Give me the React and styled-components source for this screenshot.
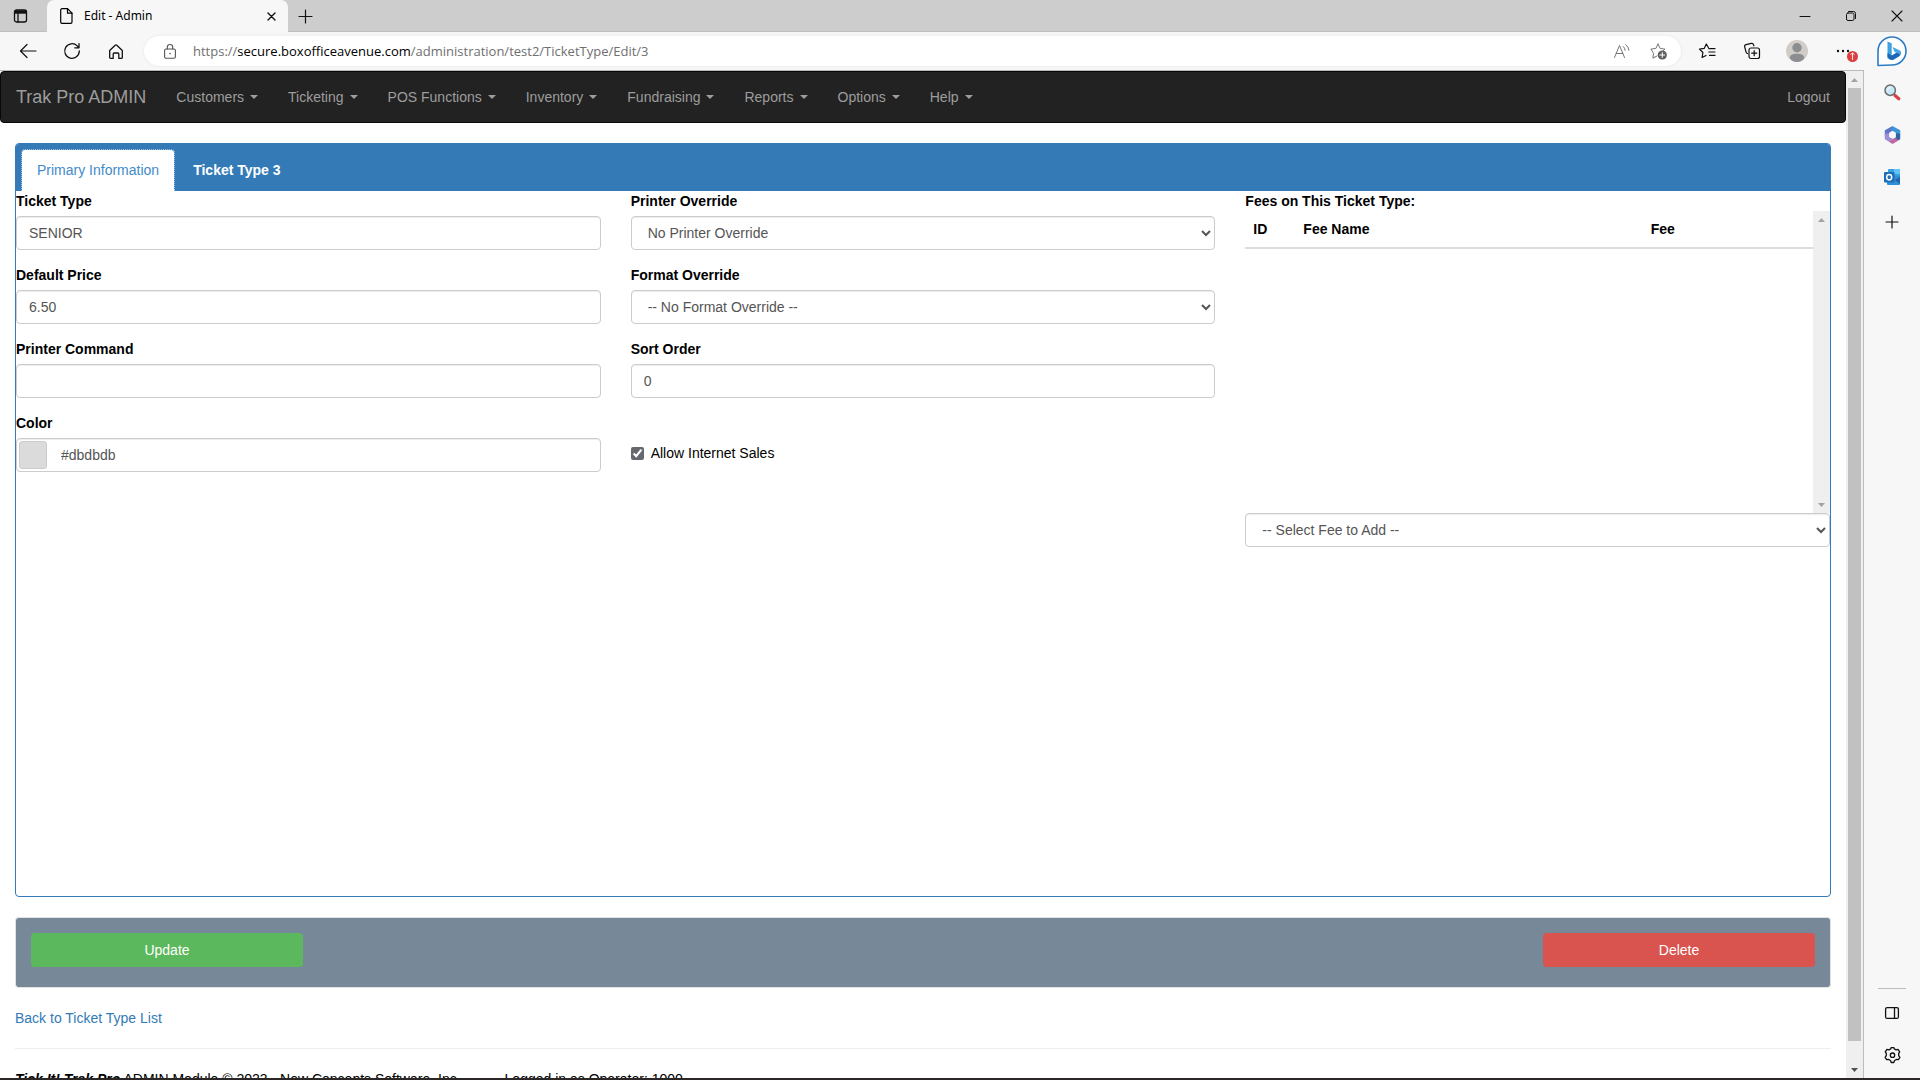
import React from "react";
import styled, { createGlobalStyle, css } from "styled-components";

const Global = createGlobalStyle`
  *, *::before, *::after { box-sizing: border-box; }
  html, body, #root { height: 100%; }
  body {
    margin: 0;
    overflow: hidden;
    font-family: "Liberation Sans", Arial, sans-serif;
    font-size: 14px;
    line-height: 20px;
    color: #000;
    background: #fff;
  }
  button, input, select { font-family: inherit; font-size: inherit; line-height: inherit; }
  a { text-decoration: none; }
  svg { display: block; flex: none; overflow: visible; }
`;

/* ---------- browser window ---------- */

const Window = styled.div`
  height: 100vh;
  display: flex;
  flex-direction: column;
  background: #f7f7f7;
  border-bottom: 2px solid #2b2727;
`;

const chromeFont = css`
  font-family: "Noto Sans", "Open Sans", sans-serif;
`;

const TitleBar = styled.header`
  ${chromeFont}
  flex: none;
  height: 32px;
  display: flex;
  background: #cdcdcd;
  box-shadow: inset 0 -1px #c0c0c0;
`;

const IconButton = styled.button`
  flex: none;
  width: ${(p) => p.$w}px;
  height: ${(p) => p.$h || 32}px;
  padding: 0;
  border: 0;
  background: none;
  color: ${(p) => p.$color || "#111"};
  display: flex;
  align-items: center;
  justify-content: center;
`;

const BrowserTab = styled.div`
  width: 241px;
  margin-left: 7px;
  padding: 0 9px 0 13px;
  display: flex;
  align-items: center;
  background: #f7f7f7;
  border-radius: 7px 7px 0 0;
  font-size: 12px;
`;

const TabTitle = styled.span`
  flex: 1;
  padding-left: 11px;
`;

const Spacer = styled.div`
  flex: 1;
`;

const Body = styled.div`
  flex: 1;
  min-height: 0;
  display: flex;
`;

const Main = styled.div`
  flex: 1;
  min-width: 0;
  display: flex;
  flex-direction: column;
`;

const Toolbar = styled.div`
  ${chromeFont}
  flex: none;
  height: 38px;
  padding-left: 6px;
  display: flex;
  align-items: center;
`;

const AddressBar = styled.div`
  flex: 1;
  height: 30px;
  margin: 0 3px 0 6px;
  padding: 0 4px 0 8px;
  display: flex;
  align-items: center;
  border-radius: 15px;
  background: #fff;
  box-shadow: 0 0 3px #e4e4e4;
`;

const Url = styled.div`
  flex: 1;
  padding-left: 5px;
  font-family: "Open Sans", "Noto Sans", sans-serif;
  font-size: 13px;
  color: #6f6f6f;
  b { font-weight: 400; color: #000; }
`;

const Sidebar = styled.aside`
  width: 56px;
  flex: none;
  padding-bottom: 1px;
  display: flex;
  flex-direction: column;
  align-items: center;
`;

const SideRule = styled.hr`
  width: 28px;
  margin: 0 0 2px;
  border: 0;
  border-top: 1px solid #bdbdbd;
`;

const Viewport = styled.div`
  flex: 1;
  min-height: 0;
  display: flex;
  background: #fff;
  border-top: 1px solid #b9b9b9;
  border-right: 1px solid #bdbdbd;
`;

const Page = styled.div`
  flex: 1;
  min-width: 0;
  overflow: hidden;
`;

const ScrollTrack = styled.div`
  flex: none;
  width: 17px;
  display: flex;
  flex-direction: column;
  align-items: center;
  justify-content: space-between;
  background: #efefef;
`;

const ScrollCap = styled.div`
  height: 17px;
  display: flex;
  align-items: center;
`;

const Thumb = styled.div`
  width: 13px;
  flex: 1;
  margin-bottom: 20px;
  background: #c1c1c1;
`;

/* ---------- site navigation ---------- */

const Navbar = styled.nav`
  display: flex;
  height: 52px;
  background: #222;
  border: 1px solid #080808;
  border-radius: 4px;
  margin-bottom: 20px;
`;

const NavLink = styled.a`
  display: flex;
  align-items: center;
  padding: 0 15px;
  color: #9d9d9d;
  font-size: ${(p) => (p.$brand ? 18 : 14)}px;
`;

const Caret = styled.span`
  margin-left: 6px;
  border-top: 4px solid currentColor;
  border-left: 4px solid transparent;
  border-right: 4px solid transparent;
`;

/* ---------- edit panel ---------- */

const Content = styled.main`
  padding: 0 15px;
`;

const Panel = styled.section`
  border: 1px solid #337ab7;
  border-radius: 4px;
  margin-bottom: 20px;
  overflow: hidden;
`;

const PanelHeading = styled.div`
  display: flex;
  gap: 2px;
  padding: 5px 5px 0;
  background: #337ab7;
`;

const Tab = styled.a`
  padding: 10px 15px;
  border: 1px solid transparent;
  border-bottom: 0;
  border-radius: 4px 4px 0 0;
  line-height: 21px;
  color: #fff;
  font-weight: 700;
  ${(p) =>
    p.$active &&
    css`
      background: #fff;
      background-clip: padding-box;
      border: 1px dotted #9cc3e6;
      border-bottom: 0;
      color: #428bca;
      font-weight: 400;
    `}
`;

const PanelBody = styled.div`
  min-height: 705px;
  display: grid;
  grid-template-columns: repeat(3, minmax(0, 1fr));
  gap: 30px;
`;

const Column = styled.div`
  display: flex;
  flex-direction: column;
`;

const Group = styled.div`
  display: flex;
  flex-direction: column;
  margin-bottom: 15px;
`;

const Label = styled.label`
  font-weight: 700;
  margin-bottom: 5px;
`;

const control = css`
  width: 100%;
  height: 34px;
  padding: 6px 12px;
  border: 1px solid #ccc;
  border-radius: 4px;
  background: #fff;
  color: #555;
  box-shadow: inset 0 1px 1px rgba(0, 0, 0, 0.075);
`;

const Input = styled.input`
  ${control}
`;

const Select = styled.select`
  ${control}
`;

const ColorControl = styled.div`
  ${control}
  display: flex;
  padding: 2px;
`;

const Swatch = styled.button`
  width: 28px;
  height: 28px;
  padding: 0;
  border: 1px solid #ccc;
  border-radius: 3px;
  background: ${(p) => p.$color};
`;

const ColorInput = styled.input`
  flex: 1;
  padding: 0 14px;
  border: 0;
  background: none;
  color: #555;
`;

const CheckRow = styled.label`
  display: flex;
  align-items: center;
  gap: 7px;
  padding-top: 30px;
`;

const Checkbox = styled.input`
  width: 13px;
  height: 13px;
  margin: 0;
  accent-color: #66686e;
`;

const FeesTitle = styled.h2`
  margin: 0;
  font-size: 14px;
  font-weight: 700;
`;

const FeesBox = styled.div`
  height: 302px;
  display: flex;
  align-items: stretch;
`;

const FeesArea = styled.div`
  flex: 1;
`;

const FeesTable = styled.table`
  width: 100%;
  border-collapse: collapse;
  table-layout: fixed;
  th {
    padding: 8px;
    text-align: left;
    border-bottom: 2px solid #ddd;
  }
  th:nth-child(1) { width: 50px; }
  th:nth-child(3) { width: 30%; }
`;

/* ---------- actions and footer ---------- */

const Actions = styled.div`
  display: flex;
  justify-content: space-between;
  padding: 15px 15px 20px;
  margin-bottom: 20px;
  background: #778899;
  background-clip: padding-box;
  border: 1px solid #e3e3e3;
  border-radius: 3px;
`;

const ActionButton = styled.button`
  width: 272px;
  height: 34px;
  border: 0;
  border-radius: 4px;
  color: #fff;
  background: ${(p) => p.$color};
`;

const BackLink = styled.a`
  color: #337ab7;
`;

const Rule = styled.hr`
  margin: 20px 0;
  border: 0;
  border-top: 1px solid #eee;
`;

const Footer = styled.footer`
  display: flex;
  gap: 44px;
  white-space: nowrap;
`;

/* ---------- drawings ---------- */

const Icon = ({ w = 18, h = w, sw = 1, children }) => (
  <svg width={w} height={h} viewBox={`0 0 ${w} ${h}`} fill="none" stroke="currentColor"
    strokeWidth={sw} strokeLinecap="round" strokeLinejoin="round" aria-hidden="true">
    {children}
  </svg>
);

const Arrow = ({ down, color = "#a3a3a3" }) => (
  <Icon w={7} h={4}>
    <path d={down ? "M0 0h7L3.5 4z" : "M0 4h7L3.5 0z"} fill={color} stroke="none" />
  </Icon>
);

const TabActionsIcon = () => (
  <Icon w={15} h={14} sw={1.3}>
    <rect x="1.5" y="1" width="12" height="12" rx="2" />
    <path d="M1.5 3h12" strokeWidth="3.4" strokeLinecap="butt" />
    <path d="M5 4v9" />
  </Icon>
);

const FileIcon = () => (
  <Icon w={13} h={16} sw={1.2}>
    <path d="M2 .7h5.5L12 5.2V14a1.3 1.3 0 0 1-1.3 1.3H2A1.3 1.3 0 0 1 .7 14V2A1.3 1.3 0 0 1 2 .7z" />
    <path d="M7.5 .7v4.5H12" />
  </Icon>
);

const PlusIcon = ({ size }) => (
  <Icon w={size} sw={1.2}>
    <path d={`M${size / 2} 0v${size}M0 ${size / 2}h${size}`} />
  </Icon>
);

const CloseIcon = ({ size, sw }) => (
  <Icon w={size} sw={sw}>
    <path d={`M0 0l${size} ${size}M${size} 0L0 ${size}`} />
  </Icon>
);

const BackIcon = () => (
  <Icon w={16} h={14} sw={1.2}><path d="M7 .5L.5 7 7 13.5M.5 7h15.5" /></Icon>
);

const RefreshIcon = () => (
  <Icon w={16} sw={1.3}>
    <path d="M15.3 8A7.3 7.3 0 1 1 13.2 2.9L15 4.8M15 .6v4.2h-4.2" />
  </Icon>
);

const HomeIcon = () => (
  <Icon w={14} h={15} sw={1.3}>
    <path d="M.7 6.5L6.2 1.2a1.2 1.2 0 0 1 1.6 0l5.5 5.3v7a.9.9 0 0 1-.9.9H9.8V10a1 1 0 0 0-1-1H5.2a1 1 0 0 0-1 1v4.4H1.6a.9.9 0 0 1-.9-.9z" />
  </Icon>
);

const LockIcon = () => (
  <Icon w={12} h={15} sw={1.1}>
    <rect x=".6" y="5" width="10.8" height="9.3" rx="1.5" />
    <path d="M3.3 5V3.2a2.7 2.7 0 0 1 5.4 0V5" />
    <circle cx="6" cy="9.6" r=".8" fill="currentColor" stroke="none" />
  </Icon>
);

const ReadAloudIcon = () => (
  <Icon w={16} h={14}>
    <path d="M.5 13.5L5.5 1.5l5 12M2.2 9.5h6.6M9.3 2.5a5 5 0 0 1 1.8 3.8M11.5.5A8 8 0 0 1 15 6.3" />
  </Icon>
);

const STAR = "M8 1l2.1 4.4 4.8.7-3.5 3.4M5 14l-2.2 1.2.8-4.9L.9 6.1l5-.7L8 1";

const AddFavoriteIcon = () => (
  <Icon w={17} h={16}>
    <path d={`${STAR}M5 14l2-1`} />
    <circle cx="12.3" cy="12" r="4.6" fill="#5f5f5f" stroke="none" />
    <path d="M12.3 9.6v4.8M9.9 12h4.8" stroke="#fff" />
  </Icon>
);

const FavoritesIcon = () => (
  <Icon w={16} h={16} sw={1.2}>
    <path d="M9.5 4.8L7.3 1 5.2 5.4.5 6.1 3.9 9.5l-.8 5L7 12.5M9.8 5.6h6.2M9.8 9h6.2M10.5 12.4h5.5" />
  </Icon>
);

const CollectionsIcon = () => (
  <Icon w={16} h={16} sw={1.2}>
    <rect x="5" y="5" width="10.5" height="10.5" rx="2" />
    <path d="M10.2 7.7v5M7.7 10.2h5M3.5 10.5a2 2 0 0 1-1.4-1.4L.7 4a2 2 0 0 1 1.4-2.4L7.2.4A2 2 0 0 1 9.6 1.8l.3 1" />
  </Icon>
);

const AvatarIcon = () => (
  <Icon w={22}>
    <circle cx="11" cy="11" r="11" fill="#d2ccc6" stroke="none" />
    <circle cx="11" cy="7.8" r="4.7" fill="#8b8d90" stroke="none" />
    <path d="M3.8 18c0-3 3-4.2 7.2-4.2s7.2 1.2 7.2 4.2c-1.5 2.5-4.2 4-7.2 4s-5.7-1.5-7.2-4z" fill="#8b8d90" stroke="none" />
  </Icon>
);

const MoreIcon = () => (
  <Icon w={14} h={14}>
    <g fill="currentColor" stroke="none">
      <circle cx="3" cy="7" r="1.2" /><circle cx="8" cy="7" r="1.2" /><circle cx="13" cy="7" r="1.2" />
    </g>
    <circle cx="17.5" cy="12.5" r="5.5" fill="#d9403f" stroke="none" />
    <path d="M17.5 15.5v-6M15.8 10.4l1.7-1.4 1.7 1.4" stroke="#fff" strokeWidth=".9" />
  </Icon>
);

const BingIcon = () => (
  <Icon w={30} h={31}>
    <path d="M1 29.5V15a14 14 0 1 1 14 14z" fill="#fff" stroke="#2b7cc4" strokeWidth="1.6" />
    <path d="M10.5 5.5l4.2 1.8v13l-4.2 2.2z" fill="#3fa0e0" stroke="none" />
    <path d="M10.5 17v3.500c0 2 2.600 4 5.500 3.400l6-3.400c2-1.500 2.300-4 1-6l-8.300 5z" fill="#1c68b8" stroke="none" />
    <path d="M15.500 11l5.500 2.500c2.500 1.200 3.200 3.500 2.200 5.500-.8-1.200-2-1.700-3.200-2l-2.600-1.200z" fill="#47a8e6" stroke="none" />
  </Icon>
);

const SearchIcon = () => (
  <Icon w={16}>
    <path d="M11 11.5l3.800 3.300" stroke="#d5424a" strokeWidth="3.2" />
    <circle cx="6.200" cy="6.200" r="5.200" fill="#c9e9f7" stroke="#6d6d6d" strokeWidth="1.5" />
    <path d="M3.500 6a2.800 2.800 0 0 1 2.700-2.600" stroke="#fff" />
  </Icon>
);

const OfficeIcon = () => (
  <Icon w={17} h={18}>
    <g stroke="none">
      <path d="M8.500 0L.8 4.300v6L5.300 8V6.800L9.500 4z" fill="#5f78c4" />
      <path d="M8.500 0L16.200 4.300v5L11.700 8V6.500L7 4z" fill="#3b93d8" />
      <path d="M16.200 8v5.300L8.500 17.800 7.500 14l4.200-2.500V7z" fill="#33639f" />
      <path d="M.8 8v5.300l7.700 4.500 2-4.500-5.200-2.300V7z" fill="#a08fd6" />
      <path d="M5 15.700l3.500 2.100 6-3.500-3-2.300z" fill="#c9659f" />
    </g>
    <path d="M8.500 5.500l3.200 1.700v3.600l-3.200 1.700-3.200-1.700V7.200z" fill="#f7f7f7" stroke="none" />
  </Icon>
);

const OutlookIcon = () => (
  <Icon w={17}>
    <rect x="4" y="0" width="12" height="9" rx="1" fill="#37a0e0" stroke="none" />
    <path d="M10 0h6v5h-6z" fill="#62c4f4" stroke="none" />
    <path d="M3 7h13v8a1 1 0 0 1-1 1H4a1 1 0 0 1-1-1z" fill="#2f8fd8" stroke="none" />
    <path d="M16 8v7l-5-4z" fill="#2065a8" stroke="none" />
    <rect x="0" y="3" width="10.500" height="10.500" rx="1" fill="#1d6dbb" stroke="none" />
    <ellipse cx="5.200" cy="8.200" rx="2.500" ry="2.700" stroke="#fff" strokeWidth="1.5" />
  </Icon>
);

const PanelIcon = () => (
  <Icon w={14} h={12} sw={1.3}>
    <rect x=".6" y=".6" width="12.8" height="10.8" rx="1.5" />
    <path d="M9.500 .6v10.800" />
  </Icon>
);

const GearIcon = () => (
  <Icon w={17} sw={1.3}>
    <path d="M6.700 1.900L7.200.6h2.600l.5 1.300 1.800 1 1.900-.5 1.700 2.500-1 1.500v2.200l1.200 1.700-1.500 2.400-2.200-.2-1.600 1-.8 2H7.200l-.7-2-1.700-1-2.100.2-1.600-2.400 1.200-1.700V6.400l-1-1.500 1.600-2.500 2 .5z" />
    <circle cx="8.500" cy="8.200" r="2.200" />
  </Icon>
);

/* ---------- page ---------- */

const MENUS = ["Customers", "Ticketing", "POS Functions", "Inventory", "Fundraising", "Reports", "Options", "Help"];

const Field = ({ id, label, children }) => (
  <Group>
    <Label htmlFor={id}>{label}</Label>
    {children}
  </Group>
);

const TextField = ({ id, label, value }) => (
  <Field id={id} label={label}><Input id={id} type="text" defaultValue={value} /></Field>
);

const SelectField = ({ id, label, option }) => (
  <Field id={id} label={label}>
    <Select id={id}><option>{option}</option></Select>
  </Field>
);

export default function App() {
  return (
    <Window>
      <Global />
      <TitleBar>
        <IconButton $w={40} aria-label="Tab actions"><TabActionsIcon /></IconButton>
        <BrowserTab>
          <FileIcon />
          <TabTitle>Edit - Admin</TabTitle>
          <IconButton $w={16} aria-label="Close tab"><CloseIcon size={7} sw={1.4} /></IconButton>
        </BrowserTab>
        <IconButton $w={34} aria-label="New tab"><PlusIcon size={13} /></IconButton>
        <Spacer />
        <IconButton $w={46} aria-label="Minimize"><Icon w={10}><path d="M0 5.5h10" /></Icon></IconButton>
        <IconButton $w={46} aria-label="Restore">
          <Icon w={10}>
            <rect x=".5" y="2" width="7.5" height="7.5" rx="1.5" />
            <path d="M2.5 .5h5A2 2 0 0 1 9.500 2.500v5" />
          </Icon>
        </IconButton>
        <IconButton $w={46} aria-label="Close window"><CloseIcon size={10} sw={1.1} /></IconButton>
      </TitleBar>

      <Body>
        <Main>
          <Toolbar>
            <IconButton $w={44} aria-label="Back"><BackIcon /></IconButton>
            <IconButton $w={44} aria-label="Refresh"><RefreshIcon /></IconButton>
            <IconButton $w={44} aria-label="Home"><HomeIcon /></IconButton>
            <AddressBar>
              <IconButton $w={36} $color="#555" aria-label="Site information"><LockIcon /></IconButton>
              <Url role="textbox" aria-label="Address">
                https://<b>secure.boxofficeavenue.com</b>/administration/test2/TicketType/Edit/3
              </Url>
              <IconButton $w={37} $color="#777" aria-label="Read aloud"><ReadAloudIcon /></IconButton>
              <IconButton $w={37} $color="#777" aria-label="Add to favorites"><AddFavoriteIcon /></IconButton>
            </AddressBar>
            <IconButton $w={45} aria-label="Favorites"><FavoritesIcon /></IconButton>
            <IconButton $w={45} aria-label="Collections"><CollectionsIcon /></IconButton>
            <IconButton $w={45} aria-label="Profile"><AvatarIcon /></IconButton>
            <IconButton $w={45} aria-label="Settings and more"><MoreIcon /></IconButton>
          </Toolbar>

          <Viewport>
            <Page>
              <Navbar>
                <NavLink href="#" $brand>Trak Pro ADMIN</NavLink>
                {MENUS.map((m) => (
                  <NavLink href="#" key={m}>{m}<Caret /></NavLink>
                ))}
                <Spacer />
                <NavLink href="#">Logout</NavLink>
              </Navbar>

              <Content>
                <Panel>
                  <PanelHeading>
                    <Tab href="#" $active>Primary Information</Tab>
                    <Tab href="#">Ticket Type 3</Tab>
                  </PanelHeading>
                  <PanelBody>
                    <Column>
                      <TextField id="type" label="Ticket Type" value="SENIOR" />
                      <TextField id="price" label="Default Price" value="6.50" />
                      <TextField id="command" label="Printer Command" value="" />
                      <Field id="color" label="Color">
                        <ColorControl>
                          <Swatch $color="#dbdbdb" aria-label="Pick color" />
                          <ColorInput id="color" type="text" defaultValue="#dbdbdb" />
                        </ColorControl>
                      </Field>
                    </Column>
                    <Column>
                      <SelectField id="printer" label="Printer Override" option="No Printer Override" />
                      <SelectField id="format" label="Format Override" option="-- No Format Override --" />
                      <TextField id="sort" label="Sort Order" value="0" />
                      <CheckRow>
                        <Checkbox type="checkbox" defaultChecked />
                        Allow Internet Sales
                      </CheckRow>
                    </Column>
                    <Column>
                      <FeesTitle>Fees on This Ticket Type:</FeesTitle>
                      <FeesBox>
                        <FeesArea>
                          <FeesTable>
                            <thead>
                              <tr><th>ID</th><th>Fee Name</th><th>Fee</th></tr>
                            </thead>
                          </FeesTable>
                        </FeesArea>
                        <ScrollTrack>
                          <ScrollCap><Arrow /></ScrollCap>
                          <ScrollCap><Arrow down /></ScrollCap>
                        </ScrollTrack>
                      </FeesBox>
                      <Select aria-label="Select Fee to Add"><option>-- Select Fee to Add --</option></Select>
                    </Column>
                  </PanelBody>
                </Panel>

                <Actions>
                  <ActionButton $color="#5cb85c">Update</ActionButton>
                  <ActionButton $color="#d9534f">Delete</ActionButton>
                </Actions>

                <BackLink href="#">Back to Ticket Type List</BackLink>
                <Rule />
                <Footer>
                  <span><b><i>Tick It! Trak Pro</i></b> ADMIN Module © 2023 - New Concepts Software, Inc.</span>
                  <span>Logged in as Operator: 1000</span>
                </Footer>
              </Content>
            </Page>
            <ScrollTrack>
              <ScrollCap><Arrow /></ScrollCap>
              <Thumb />
              <ScrollCap><Arrow down color="#505050" /></ScrollCap>
            </ScrollTrack>
          </Viewport>
        </Main>

        <Sidebar>
          <IconButton $w={40} $h={38} aria-label="Bing"><BingIcon /></IconButton>
          <IconButton $w={40} $h={43} aria-label="Search"><SearchIcon /></IconButton>
          <IconButton $w={40} $h={43} aria-label="Microsoft 365"><OfficeIcon /></IconButton>
          <IconButton $w={40} $h={43} aria-label="Outlook"><OutlookIcon /></IconButton>
          <IconButton $w={40} $h={45} aria-label="Customize"><PlusIcon size={12} /></IconButton>
          <Spacer />
          <SideRule />
          <IconButton $w={40} $h={43} aria-label="Hide sidebar"><PanelIcon /></IconButton>
          <IconButton $w={40} $h={43} aria-label="Settings"><GearIcon /></IconButton>
        </Sidebar>
      </Body>
    </Window>
  );
}
